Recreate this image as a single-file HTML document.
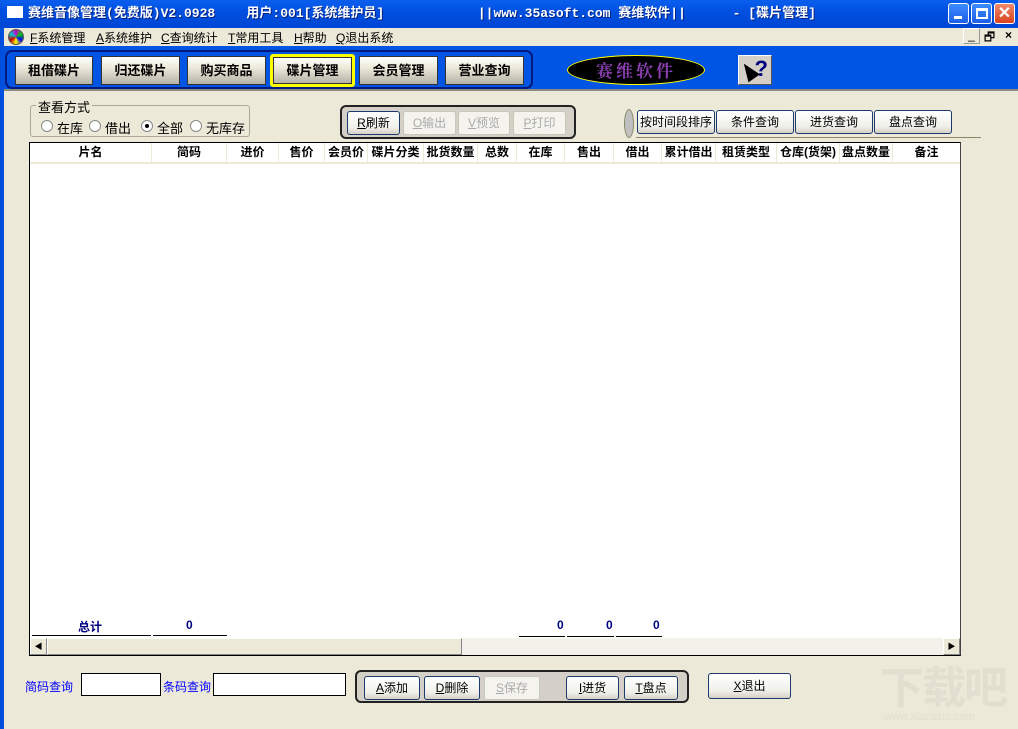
<!DOCTYPE html>
<html><head><meta charset="utf-8"><style>
*{box-sizing:border-box;margin:0;padding:0}
body{width:1018px;height:729px;overflow:hidden;background:#ECE9D8;font-family:"Liberation Sans","Noto Sans CJK SC",sans-serif;font-size:12px;position:relative;color:#000}
.a{position:absolute}
.title{left:0;top:0;width:1018px;height:28px;background:linear-gradient(#0A5FEF,#0050E0 40%,#0046D5);color:#fff;font-weight:bold;font-size:13px;font-family:"Liberation Mono","Noto Sans CJK SC",monospace;white-space:pre;line-height:28px;text-shadow:1px 1px 0 #002080}
.wb{top:3px;width:21px;height:21px;border:1px solid #fff;border-radius:3px;background:linear-gradient(#3C8CFF,#1E5FE8)}
.menu{left:4px;top:28px;width:1014px;height:18px;background:#ECE9D8}
.menu span{position:absolute;top:1px;font-size:12px}
.tb{left:4px;top:46px;width:1014px;height:45px;background:#0055E5;border-bottom:2px solid #8a8a80}
.grp{left:5px;top:50px;width:528px;height:39px;border:2px solid #001a80;border-radius:7px}
.bb{top:56px;height:29px;background:linear-gradient(#fff,#ECE9D8 40%,#b5b2a8);border:1px solid #333;font-weight:bold;font-size:13px;text-align:center;line-height:27px}
.btn{height:24px;border:1px solid #1C3A6E;border-radius:3px;background:linear-gradient(#fff,#F0F0EA 70%,#D6D0C5);text-align:center;line-height:22px;font-size:12px}
.dis{color:#aaa;border-color:#cac8bb;background:#F4F3EE}
.th{top:143px;height:21px;font-weight:bold;font-size:12px;text-align:center;line-height:19px;border-right:1px solid #ece9d8;border-bottom:2px solid #ece9d8}
.tot{color:#000080;font-weight:bold;top:618px;font-size:12px}
.rd{top:120px;width:12px;height:12px;border-radius:50%;border:1px solid #888;background:#fff}
.rl{top:118px;font-size:13px}
</style></head><body>
<div class="a" style="left:0;top:28px;width:4px;height:701px;background:#0050E0"></div>
<div class="a title"><span style="display:inline-block;width:16px;height:12px;background:#fff;margin:0 5px 0 7px;vertical-align:-1px;border-top:3px solid #fff"></span>赛维音像管理(免费版)V2.0928    用户:001[系统维护员]            ||www.35asoft.com 赛维软件||      - [碟片管理]</div>
<div class="a wb" style="left:948px"><div class="a" style="left:5px;top:12px;width:8px;height:3px;background:#fff"></div></div>
<div class="a wb" style="left:971px"><div class="a" style="left:4px;top:4px;width:12px;height:11px;border:2px solid #fff;border-top-width:3px"></div></div>
<div class="a wb" style="left:994px;background:linear-gradient(#F08A6C,#D8431E);color:#fff;font-size:16px;font-weight:bold;text-align:center;line-height:19px">✕</div>
<div class="a menu">
<div class="a" style="left:4px;top:1px;width:16px;height:16px;border-radius:50%;background:conic-gradient(#c0c,#0c0,#00f,#ff0,#c00,#0cc,#c0c);border:1px solid #555"></div>
<span style="left:26px"><u>F</u>系统管理</span><span style="left:92px"><u>A</u>系统维护</span><span style="left:157px"><u>C</u>查询统计</span><span style="left:224px"><u>T</u>常用工具</span><span style="left:290px"><u>H</u>帮助</span><span style="left:332px"><u>Q</u>退出系统</span>
<span style="left:959px;top:0;width:17px;height:16px;background:#ECE9D8;border:1px solid #fff;border-right-color:#999;border-bottom-color:#999;text-align:center;line-height:12px">_</span><span style="left:977px;top:0;width:17px;height:16px;text-align:center">🗗</span><span style="left:996px;top:0;width:17px;height:16px;text-align:center;font-weight:bold">×</span>
</div>
<div class="a tb"></div>
<div class="a grp"></div>
<div class="a bb" style="left:15px;width:78px">租借碟片</div>
<div class="a bb" style="left:101px;width:79px">归还碟片</div>
<div class="a bb" style="left:187px;width:79px">购买商品</div>
<div class="a" style="left:270px;top:54px;width:85px;height:33px;border:3px solid #ff0;border-radius:3px;background:#222"></div>
<div class="a bb" style="left:273px;top:57px;width:79px;height:27px;line-height:25px">碟片管理</div>
<div class="a bb" style="left:359px;width:79px">会员管理</div>
<div class="a bb" style="left:445px;width:79px">营业查询</div>
<div class="a" style="left:567px;top:55px;width:138px;height:30px;border-radius:50%;background:#000;border:1px solid #ff0;color:#8a3fb0;font-weight:bold;font-size:17px;text-align:center;line-height:28px;font-family:'Noto Serif CJK SC',serif;letter-spacing:3px">赛维软件</div>
<div class="a" style="left:738px;top:55px;width:34px;height:30px;background:#D4D0C8;border:1px solid #fff;border-right-color:#555;border-bottom-color:#555;font-size:22px;font-weight:bold;color:#000080;text-align:right;padding-right:3px;line-height:26px">?<div class="a" style="left:3px;top:6px;width:0;height:0;border-left:7px solid transparent;border-right:7px solid transparent;border-bottom:18px solid #000;transform:rotate(-35deg)"></div></div>

<div class="a" style="left:30px;top:105px;width:220px;height:32px;border:1px solid #aca899;border-radius:3px"></div>
<div class="a" style="left:36px;top:97px;background:#ECE9D8;padding:0 2px;font-size:13px">查看方式</div>
<div class="a rd" style="left:41px"></div><div class="a rl" style="left:57px">在库</div>
<div class="a rd" style="left:89px"></div><div class="a rl" style="left:105px">借出</div>
<div class="a rd" style="left:141px"><div class="a" style="left:3px;top:3px;width:4px;height:4px;border-radius:50%;background:#000"></div></div><div class="a rl" style="left:157px">全部</div>
<div class="a rd" style="left:190px"></div><div class="a rl" style="left:206px">无库存</div>

<div class="a" style="left:340px;top:105px;width:236px;height:34px;border:2px solid #222;border-radius:6px;background:#D4D0C8"></div>
<div class="a btn" style="left:347px;top:111px;width:53px"><u>R</u>刷新</div>
<div class="a btn dis" style="left:403px;top:111px;width:53px"><u>O</u>输出</div>
<div class="a btn dis" style="left:458px;top:111px;width:52px"><u>V</u>预览</div>
<div class="a btn dis" style="left:513px;top:111px;width:53px"><u>P</u>打印</div>

<div class="a" style="left:624px;top:109px;width:10px;height:29px;border-radius:50%;background:#c0c0c0;border:1px solid #886"></div>
<div class="a" style="left:636px;top:137px;width:345px;height:1px;background:#886"></div>
<div class="a btn" style="left:637px;top:110px;width:78px">按时间段排序</div>
<div class="a btn" style="left:716px;top:110px;width:78px">条件查询</div>
<div class="a btn" style="left:795px;top:110px;width:78px">进货查询</div>
<div class="a btn" style="left:874px;top:110px;width:78px">盘点查询</div>

<div class="a" style="left:29px;top:142px;width:932px;height:514px;background:#fff;border:1px solid #000;border-right-color:#444"></div>
<div class="a th" style="left:30px;width:122px">片名</div>
<div class="a th" style="left:152px;width:75px">简码</div>
<div class="a th" style="left:227px;width:52px">进价</div>
<div class="a th" style="left:279px;width:46px">售价</div>
<div class="a th" style="left:325px;width:43px">会员价</div>
<div class="a th" style="left:368px;width:56px">碟片分类</div>
<div class="a th" style="left:424px;width:54px">批货数量</div>
<div class="a th" style="left:478px;width:39px">总数</div>
<div class="a th" style="left:517px;width:48px">在库</div>
<div class="a th" style="left:565px;width:49px">售出</div>
<div class="a th" style="left:614px;width:48px">借出</div>
<div class="a th" style="left:662px;width:54px">累计借出</div>
<div class="a th" style="left:716px;width:61px">租赁类型</div>
<div class="a th" style="left:777px;width:63px">仓库(货架)</div>
<div class="a th" style="left:840px;width:53px">盘点数量</div>
<div class="a th" style="left:893px;width:67px;border-right:0">备注</div>

<div class="a tot" style="left:78px">总计</div>
<div class="a tot" style="left:186px">0</div>
<div class="a tot" style="left:557px">0</div>
<div class="a tot" style="left:606px">0</div>
<div class="a tot" style="left:653px">0</div>
<div class="a" style="left:32px;top:635px;width:119px;height:1px;background:#000"></div>
<div class="a" style="left:153px;top:635px;width:74px;height:1px;background:#000"></div>
<div class="a" style="left:519px;top:636px;width:46px;height:1px;background:#000"></div>
<div class="a" style="left:567px;top:636px;width:47px;height:1px;background:#000"></div>
<div class="a" style="left:616px;top:636px;width:46px;height:1px;background:#000"></div>
<div class="a" style="left:30px;top:638px;width:930px;height:17px;background:#F3F1EA"></div>
<div class="a" style="left:30px;top:638px;width:17px;height:17px;background:#ECE9D8;border:1px solid #fff;border-right-color:#888;border-bottom-color:#888;font-size:8px;text-align:center;line-height:15px">◀</div>
<div class="a" style="left:47px;top:638px;width:415px;height:17px;background:#ECE9D8;border:1px solid #fff;border-right-color:#888;border-bottom-color:#888"></div>
<div class="a" style="left:943px;top:638px;width:17px;height:17px;background:#ECE9D8;border:1px solid #fff;border-right-color:#888;border-bottom-color:#888;font-size:8px;text-align:center;line-height:15px">▶</div>

<div class="a" style="left:25px;top:678px;color:#00f">简码查询</div>
<div class="a" style="left:81px;top:673px;width:80px;height:23px;background:#fff;border:1px solid #000"></div>
<div class="a" style="left:163px;top:678px;color:#00f">条码查询</div>
<div class="a" style="left:213px;top:673px;width:133px;height:23px;background:#fff;border:1px solid #000"></div>

<div class="a" style="left:355px;top:670px;width:334px;height:33px;border:2px solid #222;border-radius:6px;background:#D4D0C8"></div>
<div class="a btn" style="left:364px;top:676px;width:56px"><u>A</u>添加</div>
<div class="a btn" style="left:424px;top:676px;width:56px"><u>D</u>删除</div>
<div class="a btn dis" style="left:484px;top:676px;width:56px"><u>S</u>保存</div>
<div class="a btn" style="left:566px;top:676px;width:53px"><u>I</u>进货</div>
<div class="a btn" style="left:624px;top:676px;width:54px"><u>T</u>盘点</div>
<div class="a btn" style="left:708px;top:673px;width:83px;height:26px;line-height:24px"><u>X</u>退出</div>

<div class="a" style="left:880px;top:665px;color:#E2DFD0;font-size:44px;font-weight:bold;letter-spacing:-2px;line-height:48px">下载吧</div>
<div class="a" style="left:884px;top:711px;color:#E2DFD0;font-size:11px">www.xiazaiba.com</div>
</body></html>
